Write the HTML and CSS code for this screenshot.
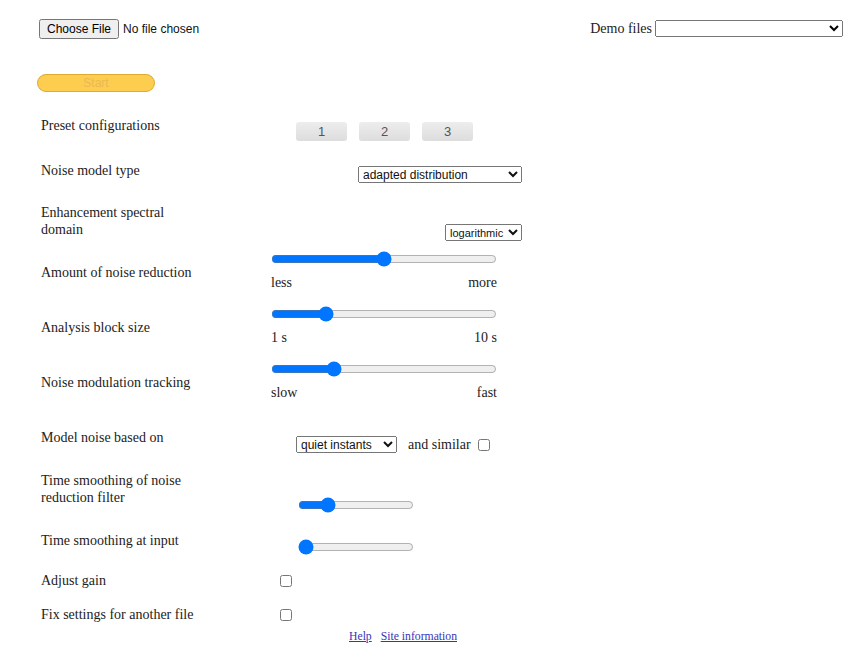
FILE: index.html
```html
<!DOCTYPE html>
<html>
<head>
<meta charset="utf-8">
<link rel="stylesheet" href="styles.css">
</head>
<body>
<div class="top">
  <input type="file" class="file">
  <div class="demo">
    <span class="demo-label">Demo files</span>
    <select class="demo-select"><option></option></select>
  </div>
</div>
<div class="start-wrap"><button class="start" disabled>Start</button></div>

<div class="form">
  <div class="label">Preset configurations</div>
  <div class="ctl presets">
    <button class="preset">1</button>
    <button class="preset">2</button>
    <button class="preset">3</button>
  </div>

  <div class="label">Noise model type</div>
  <div class="ctl noise"><select class="sel sel-noise"><option>adapted distribution</option></select></div>

  <div class="label">Enhancement spectral domain</div>
  <div class="ctl domain"><select class="sel sel-log"><option>logarithmic</option></select></div>

  <div class="label slider-label">Amount of noise reduction</div>
  <div class="ctl">
    <input type="range" class="range big" min="0" max="100" value="50">
    <div class="ends"><span>less</span><span>more</span></div>
  </div>

  <div class="label slider-label">Analysis block size</div>
  <div class="ctl">
    <input type="range" class="range big" min="1" max="10" value="3">
    <div class="ends"><span>1 s</span><span>10 s</span></div>
  </div>

  <div class="label slider-label">Noise modulation tracking</div>
  <div class="ctl">
    <input type="range" class="range big" min="0" max="100" value="26">
    <div class="ends"><span>slow</span><span>fast</span></div>
  </div>

  <div class="label">Model noise based on</div>
  <div class="ctl model">
    <select class="sel sel-model"><option>quiet instants</option></select>
    <span class="similar">and similar</span>
    <input type="checkbox" class="chk">
  </div>

  <div class="label">Time smoothing of noise reduction filter</div>
  <div class="ctl small-1"><input type="range" class="range small" min="0" max="100" value="22"></div>

  <div class="label">Time smoothing at input</div>
  <div class="ctl small-2"><input type="range" class="range small" min="0" max="100" value="0"></div>

  <div class="label">Adjust gain</div>
  <div class="ctl check"><input type="checkbox" class="chk"></div>

  <div class="label">Fix settings for another file</div>
  <div class="ctl check"><input type="checkbox" class="chk"></div>

  <div class="label"></div>
  <div class="ctl links"><a href="#">Help</a><a href="#" class="site">Site information</a></div>
</div>
</body>
</html>
```

FILE: styles.css
```css
html, body {
  margin: 0;
  padding: 0;
  background: #fff;
}
body {
  font-family: "Liberation Serif", "Times New Roman", serif;
  font-size: 14px;
  color: #222;
  width: 850px;
}
.top {
  display: flex;
  justify-content: space-between;
  align-items: flex-start;
  padding: 19px 7px 0 39px;
  height: 36px;
}
.file {
  font-family: "Liberation Sans", Arial, sans-serif;
  font-size: 12px;
  color: #111;
}
.demo {
  display: flex;
  align-items: center;
  padding-top: 1px;
}
.demo-label {
  font-size: 14px;
  margin-right: 3px;
}
.demo-select {
  width: 188px;
  height: 17px;
  font-family: "Liberation Sans", Arial, sans-serif;
  font-size: 12px;
}
.start-wrap {
  padding: 19px 0 0 37px;
  height: 43px;
}
.start {
  width: 118px;
  height: 18px;
  border-radius: 9px;
  background: #fdcd4f;
  border: 1px solid #deaa32;
  color: #eab955;
  font-family: "Liberation Sans", Arial, sans-serif;
  font-size: 12px;
  padding: 0;
}
.form {
  display: grid;
  grid-template-columns: 230px 1fr;
  grid-template-rows: 45px 42px 47px 55px 55px 68px 43px 60px 40px 34px 22px auto;
  align-items: start;
  padding-left: 41px;
}
.label {
  line-height: 17px;
  max-width: 160px;
}
.slider-label {
  margin-top: 13px;
}
.ctl {
  display: block;
}
.presets {
  display: flex;
  gap: 12px;
  margin: 5px 0 0 25px;
}
.preset {
  width: 51px;
  height: 19px;
  border: none;
  border-radius: 3px;
  background: linear-gradient(#ededed, #dddddd);
  font-family: "Liberation Sans", Arial, sans-serif;
  font-size: 13px;
  color: #555;
  padding: 0;
}
.sel {
  height: 17px;
  font-family: "Liberation Sans", Arial, sans-serif;
  font-size: 12px;
  color: #111;
  margin: 0;
}
.noise {
  margin: 4px 0 0 87px;
}
.sel-noise {
  width: 164px;
}
.domain {
  margin: 20px 0 0 174px;
}
.sel-log {
  width: 77px;
  padding: 0;
  font-size: 11px;
}
.range {
  display: block;
  margin: 0;
  height: 16px;
}
.big {
  width: 226px;
}
.ends {
  display: flex;
  justify-content: space-between;
  width: 226px;
  margin-top: 7px;
  line-height: 17px;
}
.model {
  display: flex;
  align-items: center;
  margin: 7px 0 0 25px;
}
.sel-model {
  width: 101px;
}
.similar {
  margin-left: 11px;
  font-size: 14px;
}
.model .chk {
  margin: 0 0 0 7px;
}
.chk {
  width: 12px;
  height: 12px;
  margin: 0;
}
.small-1 {
  margin: 25px 0 0 27px;
}
.small-2 {
  margin: 7px 0 0 27px;
}
.small {
  width: 116px;
}
.check {
  margin: 3px 0 0 9px;
}
.links {
  margin-left: 78px;
  line-height: 17px;
  font-size: 11.7px;
}
.links a {
  color: #3535b8;
}
.links .site {
  margin-left: 9px;
}
```
